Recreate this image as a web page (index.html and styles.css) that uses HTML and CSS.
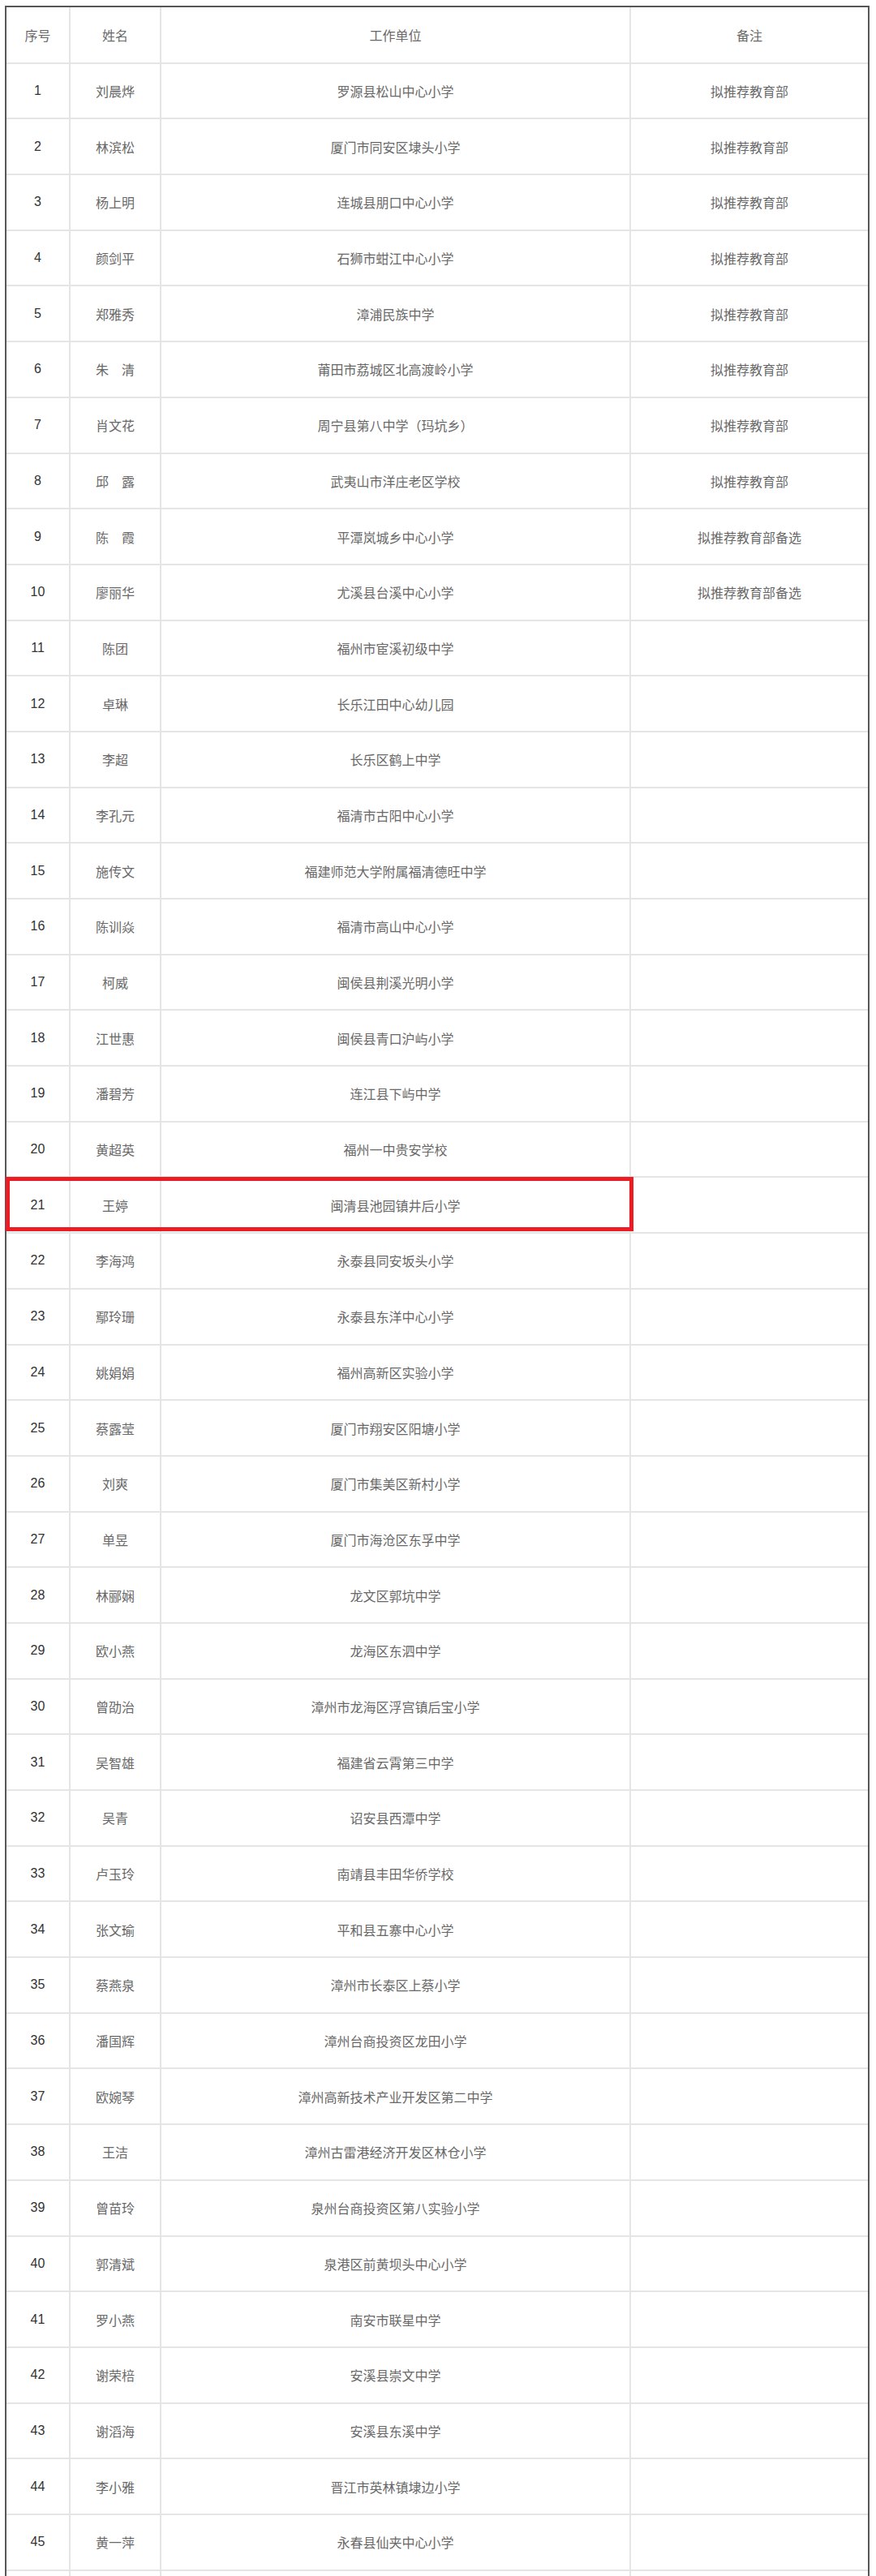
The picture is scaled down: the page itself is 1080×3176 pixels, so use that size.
FILE: index.html
```html
<!DOCTYPE html>
<html lang="zh-CN">
<head>
  <meta charset="UTF-8" />
  <meta name="viewport" content="width=device-width, initial-scale=1.0" />
  <title>拟推荐名单</title>
  <link rel="stylesheet" href="styles.css">
</head>
<body>
  <div class="sheet">
    <table class="list">
      <colgroup>
        <col class="c-no">
        <col class="c-name">
        <col class="c-unit">
        <col class="c-note">
      </colgroup>
      <thead>
        <tr><th>序号</th><th>姓名</th><th>工作单位</th><th>备注</th></tr>
      </thead>
      <tbody>
        <tr><td class="no">1</td><td>刘晨烨</td><td>罗源县松山中心小学</td><td>拟推荐教育部</td></tr>
        <tr><td class="no">2</td><td>林滨松</td><td>厦门市同安区埭头小学</td><td>拟推荐教育部</td></tr>
        <tr><td class="no">3</td><td>杨上明</td><td>连城县朋口中心小学</td><td>拟推荐教育部</td></tr>
        <tr><td class="no">4</td><td>颜剑平</td><td>石狮市蚶江中心小学</td><td>拟推荐教育部</td></tr>
        <tr><td class="no">5</td><td>郑雅秀</td><td>漳浦民族中学</td><td>拟推荐教育部</td></tr>
        <tr><td class="no">6</td><td>朱　清</td><td>莆田市荔城区北高渡岭小学</td><td>拟推荐教育部</td></tr>
        <tr><td class="no">7</td><td>肖文花</td><td>周宁县第八中学（玛坑乡）</td><td>拟推荐教育部</td></tr>
        <tr><td class="no">8</td><td>邱　露</td><td>武夷山市洋庄老区学校</td><td>拟推荐教育部</td></tr>
        <tr><td class="no">9</td><td>陈　霞</td><td>平潭岚城乡中心小学</td><td>拟推荐教育部备选</td></tr>
        <tr><td class="no">10</td><td>廖丽华</td><td>尤溪县台溪中心小学</td><td>拟推荐教育部备选</td></tr>
        <tr><td class="no">11</td><td>陈团</td><td>福州市宦溪初级中学</td><td></td></tr>
        <tr><td class="no">12</td><td>卓琳</td><td>长乐江田中心幼儿园</td><td></td></tr>
        <tr><td class="no">13</td><td>李超</td><td>长乐区鹤上中学</td><td></td></tr>
        <tr><td class="no">14</td><td>李孔元</td><td>福清市古阳中心小学</td><td></td></tr>
        <tr><td class="no">15</td><td>施传文</td><td>福建师范大学附属福清德旺中学</td><td></td></tr>
        <tr><td class="no">16</td><td>陈训焱</td><td>福清市高山中心小学</td><td></td></tr>
        <tr><td class="no">17</td><td>柯威</td><td>闽侯县荆溪光明小学</td><td></td></tr>
        <tr><td class="no">18</td><td>江世惠</td><td>闽侯县青口沪屿小学</td><td></td></tr>
        <tr><td class="no">19</td><td>潘碧芳</td><td>连江县下屿中学</td><td></td></tr>
        <tr><td class="no">20</td><td>黄超英</td><td>福州一中贵安学校</td><td></td></tr>
        <tr><td class="no marked">21<span class="mark"></span></td><td>王婷</td><td>闽清县池园镇井后小学</td><td></td></tr>
        <tr><td class="no">22</td><td>李海鸿</td><td>永泰县同安坂头小学</td><td></td></tr>
        <tr><td class="no">23</td><td>鄢玲珊</td><td>永泰县东洋中心小学</td><td></td></tr>
        <tr><td class="no">24</td><td>姚娟娟</td><td>福州高新区实验小学</td><td></td></tr>
        <tr><td class="no">25</td><td>蔡露莹</td><td>厦门市翔安区阳塘小学</td><td></td></tr>
        <tr><td class="no">26</td><td>刘爽</td><td>厦门市集美区新村小学</td><td></td></tr>
        <tr><td class="no">27</td><td>单昱</td><td>厦门市海沧区东孚中学</td><td></td></tr>
        <tr><td class="no">28</td><td>林郦娴</td><td>龙文区郭坑中学</td><td></td></tr>
        <tr><td class="no">29</td><td>欧小燕</td><td>龙海区东泗中学</td><td></td></tr>
        <tr><td class="no">30</td><td>曾劭治</td><td>漳州市龙海区浮宫镇后宝小学</td><td></td></tr>
        <tr><td class="no">31</td><td>吴智雄</td><td>福建省云霄第三中学</td><td></td></tr>
        <tr><td class="no">32</td><td>吴青</td><td>诏安县西潭中学</td><td></td></tr>
        <tr><td class="no">33</td><td>卢玉玲</td><td>南靖县丰田华侨学校</td><td></td></tr>
        <tr><td class="no">34</td><td>张文瑜</td><td>平和县五寨中心小学</td><td></td></tr>
        <tr><td class="no">35</td><td>蔡燕泉</td><td>漳州市长泰区上蔡小学</td><td></td></tr>
        <tr><td class="no">36</td><td>潘国辉</td><td>漳州台商投资区龙田小学</td><td></td></tr>
        <tr><td class="no">37</td><td>欧婉琴</td><td>漳州高新技术产业开发区第二中学</td><td></td></tr>
        <tr><td class="no">38</td><td>王洁</td><td>漳州古雷港经济开发区林仓小学</td><td></td></tr>
        <tr><td class="no">39</td><td>曾苗玲</td><td>泉州台商投资区第八实验小学</td><td></td></tr>
        <tr><td class="no">40</td><td>郭清斌</td><td>泉港区前黄坝头中心小学</td><td></td></tr>
        <tr><td class="no">41</td><td>罗小燕</td><td>南安市联星中学</td><td></td></tr>
        <tr><td class="no">42</td><td>谢荣棓</td><td>安溪县崇文中学</td><td></td></tr>
        <tr><td class="no">43</td><td>谢滔海</td><td>安溪县东溪中学</td><td></td></tr>
        <tr><td class="no">44</td><td>李小雅</td><td>晋江市英林镇埭边小学</td><td></td></tr>
        <tr><td class="no">45</td><td>黄一萍</td><td>永春县仙夹中心小学</td><td></td></tr>
        <tr><td class="no"></td><td></td><td></td><td></td></tr>
      </tbody>
    </table>
  </div>
</body>
</html>
```

FILE: styles.css
```css
body { margin: 0; background: #fff; color: #686868; font-family: "Liberation Sans", "Noto Sans CJK SC", sans-serif; font-size: 16px }

.sheet { width: 1062px; margin: 7px 0 0 6px; border: 2px solid #565656; border-bottom: none }

.list { width: 100%; border-collapse: collapse; border-style: hidden; table-layout: fixed }
.list col.c-no { width: 78px }
.list col.c-name { width: 112px }
.list col.c-unit { width: 579px }
.list col.c-note { width: 293px }
.list tr { height: 68.69px }
.list th, .list td { border: 2px solid #e5e5e5; padding: 0; text-align: center; vertical-align: middle; font-weight: normal }
.list td.no { color: #333 }

/* красная рамка вокруг строки */
.list td.marked { position: relative }
.mark {
  position: absolute; top: -1px; left: -1px;
  width: 774px; height: 67px;
  box-sizing: border-box;
  border: 5px solid #ed1c24;
  pointer-events: none;
}
```
